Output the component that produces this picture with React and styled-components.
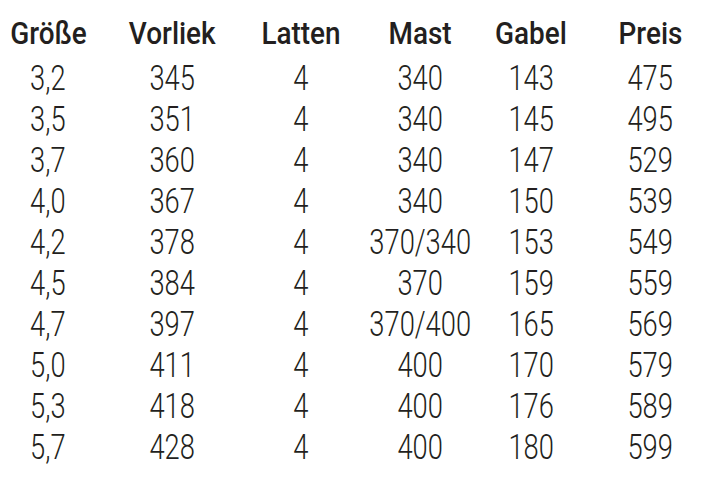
import React from "react";
import styled, { createGlobalStyle } from "styled-components";

const GlobalStyle = createGlobalStyle`
  html, body {
    margin: 0;
    padding: 0;
    background: #ffffff;
    overflow: hidden;
  }
`;

const columns = ["Größe", "Vorliek", "Latten", "Mast", "Gabel", "Preis"];

const rows = [
  ["3,2", "345", "4", "340", "143", "475"],
  ["3,5", "351", "4", "340", "145", "495"],
  ["3,7", "360", "4", "340", "147", "529"],
  ["4,0", "367", "4", "340", "150", "539"],
  ["4,2", "378", "4", "370/340", "153", "549"],
  ["4,5", "384", "4", "370", "159", "559"],
  ["4,7", "397", "4", "370/400", "165", "569"],
  ["5,0", "411", "4", "400", "170", "579"],
  ["5,3", "418", "4", "400", "176", "589"],
  ["5,7", "428", "4", "400", "180", "599"],
];

const Table = styled.div`
  display: grid;
  grid-template-columns: 96px 152px 106px 132px 90px 148px;
  padding-top: 10px;
  color: #231f20;
  font-family: Roboto, "Liberation Sans", sans-serif;
`;

const Head = styled.div`
  height: 48px;
  line-height: 48px;
  font-size: 31px;
  font-weight: 500;
  text-align: center;
  white-space: nowrap;

  span {
    display: inline-block;
    transform: scaleX(0.9);
  }
`;

const Cell = styled.div`
  height: 41px;
  line-height: 41px;
  font-size: 35px;
  font-weight: 300;
  text-align: center;
  white-space: nowrap;

  span {
    display: inline-block;
    transform: scaleX(0.78);
  }
`;

export default function App() {
  return (
    <>
      <GlobalStyle />
      <Table>
        {columns.map((c) => (
          <Head key={c}>
            <span>{c}</span>
          </Head>
        ))}
        {rows.map((r, i) =>
          r.map((v, j) => (
            <Cell key={i + "-" + j}>
              <span>{v}</span>
            </Cell>
          ))
        )}
      </Table>
    </>
  );
}
